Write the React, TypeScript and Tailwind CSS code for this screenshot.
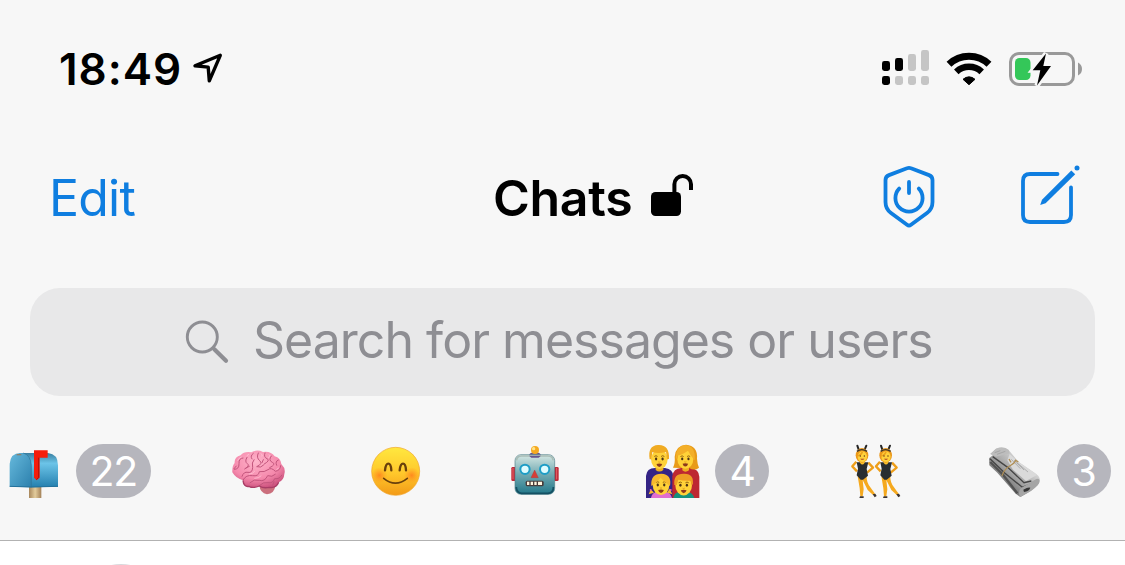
import type { ReactNode } from "react"

function LocationArrow() {
  return (
    <svg width="36" height="38" viewBox="0 0 36 38" fill="none">
      <path d="M30.3 5.3 5 15.8 18.2 17.1 19.3 30.8Z" stroke="black" strokeWidth="3.4" strokeLinejoin="round" />
    </svg>
  )
}

function Signal() {
  return (
    <svg width="48" height="38" viewBox="882 50 48 38">
      <g fill="black">
        <rect x="882" y="61" width="8" height="10" rx="2.4" />
        <rect x="895" y="58" width="8" height="13" rx="2.4" />
        <rect x="882" y="76" width="8" height="9" rx="2.4" />
      </g>
      <g fill="#c5c5c5">
        <rect x="908" y="54" width="8" height="17" rx="2.4" />
        <rect x="921" y="50" width="8" height="21" rx="2.4" />
        <rect x="895" y="76" width="8" height="9" rx="2.4" />
        <rect x="908" y="76" width="8" height="9" rx="2.4" />
        <rect x="921" y="76" width="8" height="9" rx="2.4" />
      </g>
    </svg>
  )
}

function Wifi() {
  return (
    <svg width="48" height="38" viewBox="945 50 48 38" fill="none">
      <path d="M949 64.3A29 29 0 0 1 989 64.3" stroke="black" strokeWidth="7" />
      <path d="M956.3 71.8A18.6 18.6 0 0 1 981.7 71.8" stroke="black" strokeWidth="6.6" />
      <path d="M963 79.3Q969 74.4 975 79.3L969 84.7Z" fill="black" stroke="black" strokeLinejoin="round" />
    </svg>
  )
}

function Battery() {
  return (
    <svg width="75" height="38" viewBox="1008 50 75 38">
      <rect x="1010.5" y="53.5" width="63" height="31" rx="8.5" fill="none" stroke="#999" strokeWidth="3" />
      <path d="M1078 62.5Q1082 64.5 1082 69T1078 75.5Z" fill="#999" />
      <rect x="1015" y="58" width="15.5" height="22" rx="4.5" fill="#34c759" />
      <path
        d="M1046 53.5 1032.7 70.3H1040.3L1037 85.5 1051 66H1043.3Z"
        fill="black"
        stroke="#f7f7f7"
        strokeWidth="5"
        paintOrder="stroke"
      />
    </svg>
  )
}

function Lock() {
  return (
    <svg width="44" height="50" viewBox="650 173 44 50" fill="none">
      <rect x="651" y="192" width="30" height="24" rx="4.5" fill="black" />
      <path d="M674.4 194V184.3A8.3 8.3 0 0 1 691 184.3V190" stroke="black" strokeWidth="4" />
    </svg>
  )
}

function ShieldPower() {
  return (
    <svg width="58" height="76" viewBox="0 0 58 76" fill="none" stroke="#0f7ee0" strokeWidth="3.8" strokeLinecap="round" strokeLinejoin="round">
      <path d="M27 8.3Q29 7.4 31 8.3L49 15.1Q52.5 16.4 52.5 20V42Q52.5 49 47 53L31 64.7Q29 66.2 27 64.7L11 53Q5.5 49 5.5 42V20Q5.5 16.4 9 15.1Z" />
      <path d="M29 22V33M19.2 28.6A13.6 13.6 0 1 0 38.8 28.6" />
    </svg>
  )
}

function Compose() {
  return (
    <svg width="64" height="72" viewBox="1018 162 64 72" fill="none" stroke="#0f7ee0" strokeWidth="3.8" strokeLinecap="round">
      <path d="M1057.5 174H1030Q1023 174 1023 181V215Q1023 222 1030 222H1064Q1071 222 1071 215V187.5" />
      <path d="M1040.2 205 1042 199.7 1071.3 170.4 1075.2 174.2 1045.6 203.3Z" fill="#0f7ee0" stroke="none" />
      <circle cx="1077" cy="168" r="2.5" fill="#0f7ee0" stroke="none" />
    </svg>
  )
}

function SearchIcon() {
  return (
    <svg width="44" height="44" viewBox="185 320 44 44" fill="none" stroke="#8e8e93" strokeLinecap="round">
      <circle cx="202.3" cy="337" r="15" strokeWidth="2.9" />
      <path d="M214.3 349.2 226 360.8" strokeWidth="4.2" />
    </svg>
  )
}

function Mailbox() {
  return (
    <svg width="54" height="54" viewBox="21 42 162 162">
      <defs>
        <linearGradient id="mailSide" x1="0" y1="0" x2="0" y2="1">
          <stop offset="0" stopColor="#397fa1" />
          <stop offset=".3" stopColor="#6cc4e8" />
          <stop offset="1" stopColor="#247fae" />
        </linearGradient>
        <linearGradient id="mailFront" x1="0" y1="0" x2="1" y2="1">
          <stop offset="0" stopColor="#66b9dc" />
          <stop offset="1" stopColor="#2c80ad" />
        </linearGradient>
        <linearGradient id="mailPost">
          <stop offset="0" stopColor="#a8875c" />
          <stop offset=".5" stopColor="#e3cc9c" />
          <stop offset="1" stopColor="#a38158" />
        </linearGradient>
      </defs>
      <path d="M87 168H124V204H87Z" fill="url(#mailPost)" />
      <path d="M58 69H144Q174 72 174 106V170L91 172Z" fill="url(#mailSide)" />
      <path d="M29 170V102Q31 69 61 69Q92 70 94 105V172Z" fill="url(#mailFront)" />
      <path d="M94 172V106Q92 76 70 69" fill="none" stroke="#2f7699" strokeWidth="2" />
      <path d="M50 74H64" stroke="#8b806b" strokeWidth="4" />
      <path d="M29 169 94 171 174 169" fill="none" stroke="#23719b" strokeWidth="3" />
      <path d="M102 61H143V83H119V143L110 151 102 143Z" fill="#f51d0c" />
      <path d="M116 83V142L109 149" fill="none" stroke="#b70f08" strokeWidth="3" />
    </svg>
  )
}

function Brain() {
  return (
    <svg width="54" height="54" viewBox="693 42 162 162">
      <defs>
        <radialGradient id="brainFill" cx=".45" cy=".3" r=".7">
          <stop offset="0" stopColor="#ffb5cb" />
          <stop offset=".65" stopColor="#f589ac" />
          <stop offset="1" stopColor="#cf5681" />
        </radialGradient>
      </defs>
      <path d="M778 165Q780 189 801 193 823 191 826 168Z" fill="#cb6f7d" />
      <path
        d="M697 127Q696 108 704 99 702 82 722 76 733 63 754 67 771 57 789 66 812 62 824 79 842 84 844 102 858 116 853 132 852 150 836 157 829 175 808 172 790 176 778 168 759 176 747 169 731 172 729 151 708 146 697 127Z"
        fill="url(#brainFill)"
      />
      <g fill="none" stroke="#c2557c" strokeWidth="3" strokeLinecap="round">
        <path d="M703 118Q718 118 717 101T729 84M726 139Q731 124 744 127T758 112Q754 98 762 89" />
        <path d="M741 82Q733 95 742 101T734 117M760 70Q749 78 756 87M775 69Q768 83 779 92T770 110Q783 115 791 105" />
        <path d="M795 69Q790 81 801 86T793 102M814 78Q804 91 817 97T809 113M835 90Q824 94 830 106" />
        <path d="M730 149Q738 134 757 137T778 125Q794 127 804 119T826 124Q842 121 842 107" />
        <path d="M750 158Q762 146 778 151T803 137Q816 143 826 133M779 166Q790 155 804 158T824 146Q839 148 845 136" />
        <path d="M709 108 702 116M748 109 738 114M790 89 786 98M822 155 818 166" />
      </g>
      <g fill="none" stroke="#ffc9da" strokeWidth="3" strokeLinecap="round" opacity=".7">
        <path d="M713 91Q717 83 724 81M746 73 741 77M783 71Q790 74 786 79M807 74Q813 75 806 83M748 132Q759 132 764 124M764 145Q777 145 783 138M836 114 830 118" />
      </g>
      <path d="M729 151Q731 172 747 169 759 176 778 168 790 176 808 172 829 175 836 157" fill="none" stroke="#a93d66" strokeWidth="4" />
    </svg>
  )
}

function Smile() {
  return (
    <svg width="54" height="54" viewBox="60 42 162 162">
      <defs>
        <linearGradient id="smileFill" x1="0" y1="0" x2="0" y2="1">
          <stop offset="0" stopColor="#ffe83f" />
          <stop offset=".55" stopColor="#ffc72b" />
          <stop offset="1" stopColor="#f39a17" />
        </linearGradient>
        <radialGradient id="blush">
          <stop offset="0" stopColor="#ff761b" stopOpacity=".75" />
          <stop offset="1" stopColor="#ff8b1b" stopOpacity="0" />
        </radialGradient>
      </defs>
      <circle cx="140" cy="124" r="72" fill="url(#smileFill)" stroke="#f0a52b" strokeWidth="2" />
      <circle cx="91" cy="136" r="24" fill="url(#blush)" />
      <circle cx="188" cy="136" r="24" fill="url(#blush)" />
      <g fill="none" stroke="#69400c" strokeLinecap="round">
        <path d="M108 121Q110 101 118 101T127 121M152 121Q154 101 162 101T171 121" strokeWidth="7" />
        <path d="M104 145Q139 174 175 145" strokeWidth="5" />
      </g>
    </svg>
  )
}

function Robot() {
  return (
    <svg width="54" height="54" viewBox="474 42 162 162">
      <defs>
        <linearGradient id="robotFill" x1="0" y1="0" x2="0" y2="1">
          <stop offset="0" stopColor="#d6e8e4" />
          <stop offset=".45" stopColor="#79aeb5" />
          <stop offset="1" stopColor="#217789" />
        </linearGradient>
      </defs>
      <rect x="484" y="111" width="14" height="42" rx="4" fill="#bf2635" />
      <rect x="612" y="111" width="14" height="42" rx="4" fill="#bf2635" />
      <path d="M489 114V148M620 114V148" stroke="#f48585" strokeWidth="2" />
      <path d="M537 76Q539 67 555 67T573 76L566 83H544Z" fill="#65538d" />
      <circle cx="555" cy="60" r="12" fill="#f5aa20" />
      <circle cx="551" cy="56" r="5" fill="#ffe48a" />
      <rect x="495" y="74" width="119" height="119" rx="18" fill="url(#robotFill)" stroke="#52818a" strokeWidth="2" />
      <path d="M500 91Q499 79 515 78H594Q610 79 609 91" fill="none" stroke="#a9bdb7" strokeWidth="5" />
      <path d="M499 171Q499 188 515 190H594Q611 188 610 171" fill="none" stroke="#155063" strokeWidth="5" />
      <path d="M537 77H573L566 83H544Z" fill="#65538d" />
      <g fill="#dffcff" stroke="#1e9dc6" strokeWidth="6">
        <circle cx="525" cy="118" r="14" />
        <circle cx="584" cy="118" r="14" />
      </g>
      <path d="M554 120 543 143H565Z" fill="#d83d36" stroke="#a9322f" strokeWidth="1" />
      <rect x="527" y="152" width="54" height="17" rx="5" fill="#483d3c" />
      <path d="M531 160H538M542 160H549M553 160H560M564 160H576" stroke="#fff6df" strokeWidth="10" />
    </svg>
  )
}

interface FaceProps {
  x: number
  y: number
  r: number
}

function Face({ x, y, r }: FaceProps) {
  return (
    <g transform={`translate(${x} ${y}) scale(${r / 25})`}>
      <ellipse rx="23" ry="27" fill="#ffd238" />
      <path d="M-14-8Q-9-12-5-8M5-8Q9-12 14-8" fill="none" stroke="#85530c" strokeWidth="2.5" />
      <ellipse cx="-9" cy="-1" rx="3.2" ry="4" fill="#4c3215" />
      <ellipse cx="9" cy="-1" rx="3.2" ry="4" fill="#4c3215" />
      <path d="M-8 13Q0 10 8 13 6 21 0 21T-8 13Z" fill="#8c391b" />
      <path d="M-3 7Q0 9 3 7" fill="none" stroke="#d38c16" strokeWidth="2" />
    </g>
  )
}

function Family() {
  return (
    <svg width="54" height="54" viewBox="48 42 162 162">
      <path d="M48 204V137Q50 115 75 114H105Q130 117 130 140V204Z" fill="#342485" />
      <path d="M127 204V139Q130 115 153 114H182Q207 118 208 140V204Z" fill="#bd2832" />
      <path d="M77 106H100V120Q88 129 77 120ZM157 106H177V121Q166 129 157 121Z" fill="#edae21" />
      <path d="M129 113Q136 99 134 80 137 46 168 44 204 47 201 86 202 102 207 113 194 124 177 114H148Z" fill="#e89b19" />
      <Face x={88} y={88} r={27} />
      <Face x={166} y={88} r={26} />
      <path d="M59 88Q52 47 84 45 119 43 117 87L111 88 108 66Q83 72 67 66L64 88Z" fill="#f0ab22" />
      <path d="M138 89Q135 50 166 45 198 48 194 91 181 76 174 62 157 74 144 76Z" fill="#f3af29" />
      <path d="M63 204Q65 188 82 185H105Q123 188 126 204Z" fill="#e16ed0" />
      <path d="M130 204Q132 188 149 185H171Q189 188 193 204Z" fill="#16917d" />
      <path d="M62 178 56 193 72 188ZM119 176 127 193 111 188Z" fill="#f6b831" />
      <Face x={93} y={166} r={27} />
      <Face x={161} y={167} r={27} />
      <path d="M64 168Q61 131 94 131 126 132 120 168 104 156 92 143 82 157 64 168Z" fill="#f7b92d" />
      <path d="M133 165Q129 130 162 131 194 130 188 166L181 152Q160 153 145 149L140 165Z" fill="#ee9e25" />
      <circle cx="62" cy="180" r="3" fill="#ef66ad" />
      <circle cx="122" cy="180" r="3" fill="#ef66ad" />
    </svg>
  )
}

function Dancer() {
  return (
    <g>
      <path d="M79 95 67 109 81 124M115 98 129 113 111 128" fill="none" stroke="#ee9e19" strokeWidth="7" strokeLinejoin="round" />
      <path d="M83 139H110Q109 157 121 172L135 191 130 196 113 180 98 150 101 178 98 199H91L89 175Z" fill="#f5a91f" />
      <path d="M90 199H101V204H88ZM128 193 136 191 140 198 134 202Z" fill="#3c3431" />
      <path d="M80 97H115L110 117 114 137 99 149H92L80 136 84 116Z" fill="#292d30" />
      <path d="M89 89H104V98Q97 109 90 98Z" fill="#ffc32c" />
      <path d="M82 47 86 59M109 47 104 59" stroke="#252525" strokeWidth="6" strokeLinecap="round" />
      <ellipse cx="96" cy="76" rx="19" ry="22" fill="#eb981b" />
      <ellipse cx="97" cy="80" rx="14" ry="16" fill="#ffd13b" />
      <path d="M81 64Q95 54 111 64" fill="none" stroke="#38352c" strokeWidth="4" />
      <path d="M97 65Q95 75 82 78" fill="none" stroke="#eda11d" strokeWidth="5" />
      <circle cx="91" cy="78" r="2" fill="#573113" />
      <circle cx="103" cy="78" r="2" fill="#573113" />
      <path d="M91 86Q97 93 103 86Z" fill="#a83d20" />
    </g>
  )
}

function Dancers() {
  return (
    <svg width="54" height="54" viewBox="57 42 162 162">
      <Dancer />
      <g transform="translate(71 0)">
        <Dancer />
      </g>
    </svg>
  )
}

function Newspaper() {
  return (
    <svg width="54" height="54" viewBox="54 42 162 162">
      <defs>
        <linearGradient id="paperFill" x1="0" y1="1" x2="1" y2="0">
          <stop offset=".2" stopColor="#626262" />
          <stop offset=".48" stopColor="#a8a8a8" />
          <stop offset=".75" stopColor="#dedede" />
        </linearGradient>
      </defs>
      <path d="M57 85 70 74 61 72 78 56Q101 48 116 60L147 97 190 126Q210 137 210 151 208 166 183 183L151 201 137 191 82 128 58 106Z" fill="url(#paperFill)" />
      <path d="M61 72 78 56Q101 48 116 60L119 70 78 80Z" fill="#bdbdbd" />
      <path d="M119 72 147 97 190 126 201 135 168 153 129 119 112 91Z" fill="#dadada" />
      <path d="M60 86 105 130 157 172 187 159M68 80 113 112 162 158 184 153" fill="none" stroke="#454545" strokeWidth="4" />
      <path d="M61 96 98 133 142 190" fill="none" stroke="#525252" strokeWidth="7" />
      <path d="M149 199Q141 178 162 169L199 147Q211 144 208 157 204 173 151 201Z" fill="#a5a5a5" />
      <path d="M160 179Q175 170 181 173 177 184 162 186Z" fill="#353535" />
      <path d="M74 68 91 62M81 73 106 64M124 88 151 116M132 91 162 120M141 98 174 126" fill="none" stroke="#999" strokeWidth="2" />
      <path d="M96 137Q104 116 119 108T137 91L145 96M123 97 117 87" fill="none" stroke="#b08f55" strokeWidth="4" />
    </svg>
  )
}

function Badge({ children }: { children: ReactNode }) {
  return (
    <span className="flex h-[54px] min-w-[54px] items-center justify-center rounded-full bg-[#b6b6bd] px-[13.5px] text-[41px] leading-none tracking-[-1.2px] text-white">
      {children}
    </span>
  )
}

const tabs = [
  { id: "inbox", icon: <Mailbox />, count: 22 },
  { id: "brain", icon: <Brain /> },
  { id: "smile", icon: <Smile /> },
  { id: "robot", icon: <Robot /> },
  { id: "family", icon: <Family />, count: 4 },
  { id: "dancers", icon: <Dancers /> },
  { id: "news", icon: <Newspaper />, count: 3 },
]

export default function App() {
  return (
    <div className="h-[565px] w-[1125px] overflow-hidden bg-white font-['Inter',sans-serif]">
      <div className="h-[541px] border-b border-[#b2b2b2] bg-[#f7f7f7]">
        {/* Status bar */}
        <div className="flex h-[138px] items-center justify-between pr-[42px] pl-[59px]">
          <div className="flex items-center gap-[9px]">
            <span className="w-[122px] text-[44px] font-semibold tracking-[1px] whitespace-nowrap">18:49</span>
            <LocationArrow />
          </div>
          <div className="flex items-center gap-[15px]">
            <Signal />
            <Wifi />
            <Battery />
          </div>
        </div>

        {/* Navigation */}
        <div className="flex h-[120px] items-center pr-[43px] pl-[49px]">
          <button className="w-[444px] text-left text-[50px] tracking-[-0.8px] text-[#0f7ee0]">Edit</button>
          <h1 className="w-[157px] text-[50px] font-semibold tracking-[-0.3px] whitespace-nowrap">Chats</h1>
          <Lock />
          <div className="ml-auto flex items-center gap-20">
            <ShieldPower />
            <Compose />
          </div>
        </div>

        {/* Search */}
        <div className="mx-[30px] mt-[30px] flex h-[108px] items-center rounded-[30px] bg-[#e8e8e9] pl-[155px] text-[#8e8e93]">
          <SearchIcon />
          <span className="ml-6 pb-[3px] text-[50px] tracking-[-0.98px] whitespace-nowrap">Search for messages or users</span>
        </div>

        {/* Folders */}
        <div className="mt-12 flex gap-20 pl-[7px]">
          {tabs.map((tab) => (
            <div key={tab.id} className={tab.count ? "flex shrink-0 gap-[15px]" : "shrink-0 pr-[4.5px]"}>
              {tab.icon}
              {tab.count && <Badge>{tab.count}</Badge>}
            </div>
          ))}
        </div>
      </div>

      {/* Top of the first avatar */}
      <div className="mt-[23px] ml-[76px] size-[90px] rounded-full bg-[#d8d8dc]" />
    </div>
  )
}
